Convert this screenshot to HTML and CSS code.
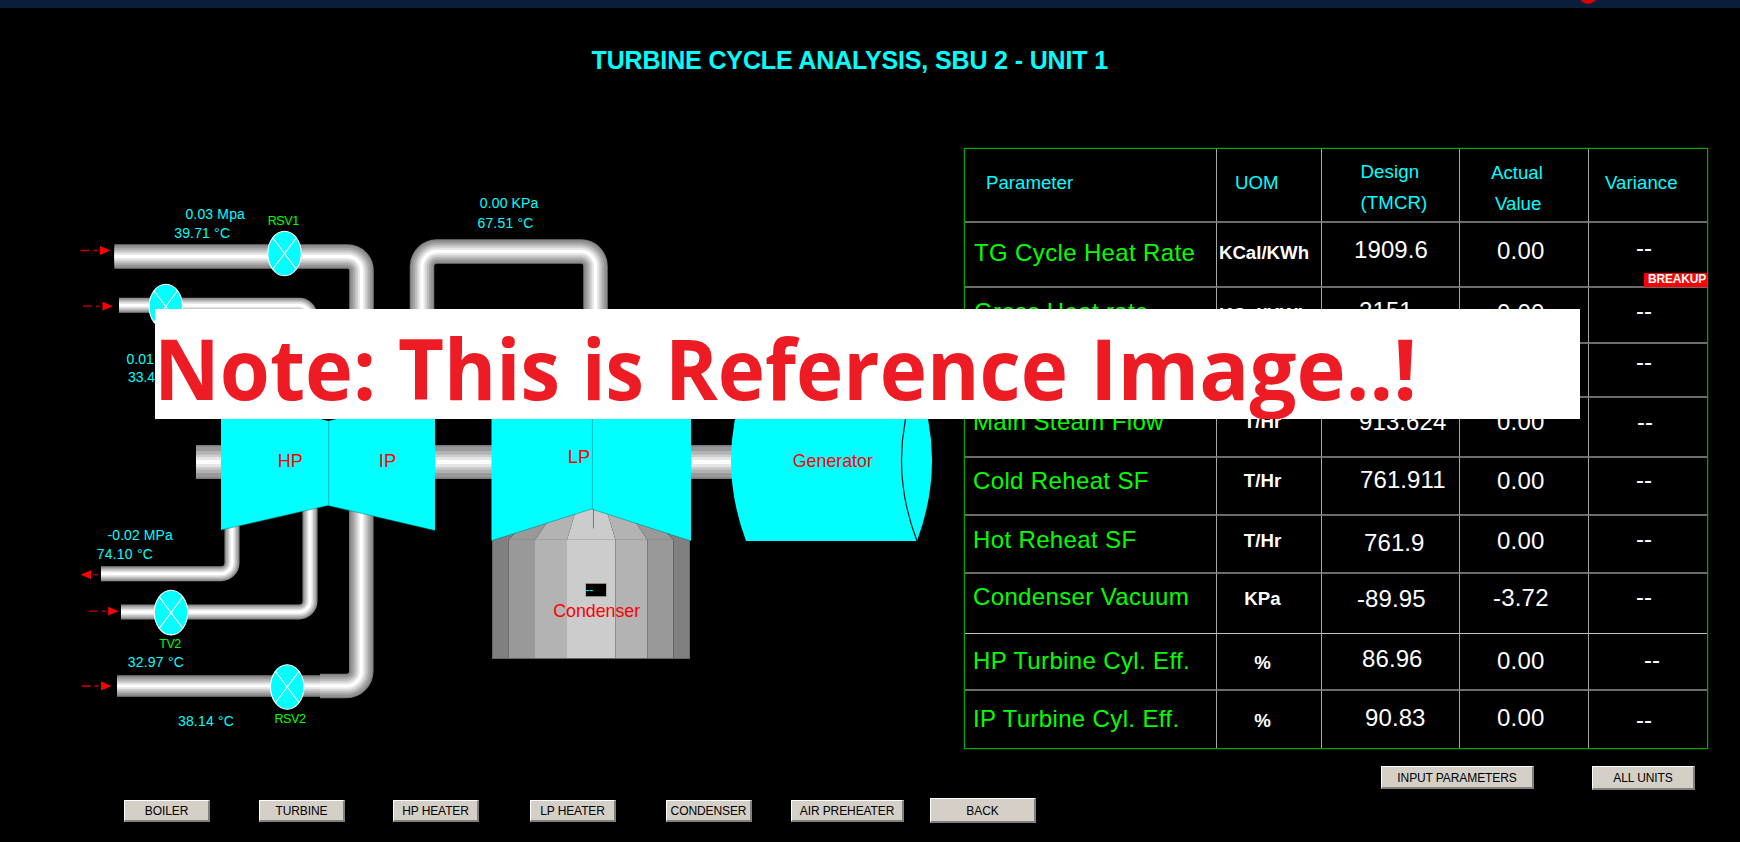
FILE: index.html
```html
<!DOCTYPE html>
<html lang="en">
<head>
<meta charset="utf-8">
<title>Turbine Cycle Analysis</title>
<link rel="stylesheet" href="styles.css">
</head>
<body>
<header class="topbar"><span class="alert-dot"></span></header>
<h1 class="title">TURBINE CYCLE ANALYSIS, SBU 2 - UNIT 1</h1>
<main class="content">
  <section class="left">
    <svg class="diagram" width="964" height="698" viewBox="0 100 964 698">
      <defs>
        <g id="wide">
          <path d="M114.5 256.5H347.5A14 14 0 0 1 361.5 270.5V330"/>
          <path d="M320 686H346.3A15 15 0 0 0 361.3 671V490"/>
          <path d="M422 330V266.6A15 15 0 0 1 437 251.6H581A14.5 14.5 0 0 1 595.5 266.1V330"/>
        </g>
        <path id="reheat" d="M117 686H321"/>
        <g id="thin">
          <path d="M119 305.3H299A11 11 0 0 1 310 316.3V330"/>
          <path d="M101 573.7H221A11 11 0 0 0 232 562.7V515"/>
          <path d="M121 612H299A11 11 0 0 0 310 601V490"/>
        </g>
        <path id="shaft" d="M196 462H740"/>
        <g id="valve">
          <ellipse rx="16.7" ry="22.3"/>
          <path d="M-12-16L12 16M12-16L-12 16"/>
        </g>
        <g id="arrow">
          <path class="dash" d="M0 0H9M13 0H17"/>
          <path class="head" d="M19.5-4.4L30 0L19.5 4.4Z"/>
        </g>
      </defs>

      <g class="pipes">
        <use href="#thin" class="t1"/><use href="#thin" class="t2"/><use href="#thin" class="t3"/><use href="#thin" class="t4"/><use href="#thin" class="t5"/>
        <use href="#reheat" class="r1p"/><use href="#reheat" class="r2p"/><use href="#reheat" class="r3p"/><use href="#reheat" class="r4p"/><use href="#reheat" class="r5p"/><use href="#reheat" class="r6p"/>
        <use href="#wide" class="w1"/><use href="#wide" class="w2"/><use href="#wide" class="w3"/><use href="#wide" class="w4"/><use href="#wide" class="w5"/><use href="#wide" class="w6"/><use href="#wide" class="w7"/>
        <use href="#shaft" class="s1"/><use href="#shaft" class="s2"/><use href="#shaft" class="s3"/><use href="#shaft" class="s4"/><use href="#shaft" class="s5"/><use href="#shaft" class="s6"/>
      </g>

      <g class="condenser">
        <path class="c1" d="M492 659V505H541L508.5 540V659Z"/>
        <path class="c2" d="M508.5 659V540L541 505H559L535 540V659Z"/>
        <path class="c3" d="M535 659V540L559 505H577.5L567 540V659Z"/>
        <path class="c4" d="M567 659V540L577.5 505H605L615.5 540V659Z"/>
        <path class="c3" d="M615.5 659V540L605 505H624L647.5 540V659Z"/>
        <path class="c2" d="M647.5 659V540L624 505H641L673.5 540V659Z"/>
        <path class="c1" d="M673.5 659V540L641 505H690V659Z"/>
        <path class="seam" d="M508 539.5H674"/>
        <path class="edge" d="M492.5 541V658.5H689.5V541"/>
      </g>
      <g class="machine">
        <path d="M221 394L328.5 421L435 394V530.5L328 505.5L221 530Z"/>
        <path d="M491.5 400H691V541L591.5 509L491.5 540.7Z"/>
        <path d="M746 380Q716 460 746 541H917Q947 460 917 380Z"/>
        <path class="crease" d="M221 530L328 505.5L435 530.5M328.7 421V505M491.5 540.7L591.5 509L691 541M592.4 410V509"/>
        <path class="crease-dark" d="M593.5 509V528.5"/>
        <path class="cap" d="M917 380Q886 460 917 541"/>
      </g>

      <g class="valves">
        <use href="#valve" x="284.5" y="253.5"/>
        <use href="#valve" x="165.8" y="306.5"/>
        <use href="#valve" x="171" y="612.6"/>
        <use href="#valve" x="287.2" y="687"/>
      </g>
      <g class="arrows">
        <use href="#arrow" x="80.5" y="250.5"/>
        <use href="#arrow" x="83" y="306.2"/>
        <use href="#arrow" x="88.7" y="611.2"/>
        <use href="#arrow" x="81.5" y="686"/>
        <path class="dash" d="M93 574.7H98"/>
        <path class="head" d="M91 570.3L80.5 574.7L91 579Z"/>
      </g>

      <rect class="box-edge" x="585.5" y="583" width="21" height="14"/>
      <rect class="box" x="586" y="584" width="20" height="12"/>
      <g class="reading">
        <text x="585.6" y="594" class="tiny">--</text>
        <text x="185.4" y="219" textLength="59.5">0.03 Mpa</text>
        <text x="174.2" y="238" textLength="55.8">39.71 °C</text>
        <text x="126.5" y="364">0.01</text>
        <text x="128" y="382" textLength="27">33.4</text>
        <text x="479.8" y="208" textLength="58.5">0.00 KPa</text>
        <text x="477.4" y="228" textLength="56">67.51 °C</text>
        <text x="107.5" y="540.3" textLength="65.3">-0.02 MPa</text>
        <text x="96.8" y="559" textLength="56">74.10 °C</text>
        <text x="127.8" y="667" textLength="56">32.97 °C</text>
        <text x="177.9" y="726" textLength="56">38.14 °C</text>
      </g>
      <g class="tag">
        <text x="267.7" y="225" textLength="31.5">RSV1</text>
        <text x="159.3" y="648" textLength="22">TV2</text>
        <text x="274.4" y="723" textLength="31.5">RSV2</text>
      </g>
      <g class="name">
        <text x="277.8" y="467" textLength="25" lengthAdjust="spacingAndGlyphs">HP</text>
        <text x="378.8" y="467" textLength="17.3" lengthAdjust="spacingAndGlyphs">IP</text>
        <text x="567.8" y="463" textLength="22.3" lengthAdjust="spacingAndGlyphs">LP</text>
        <text x="792.8" y="467" textLength="80" lengthAdjust="spacingAndGlyphs">Generator</text>
        <text x="553.3" y="617" textLength="86.8" lengthAdjust="spacingAndGlyphs">Condenser</text>
      </g>
    </svg>
    <nav class="nav">
      <button class="btn b1">BOILER</button>
      <button class="btn b2">TURBINE</button>
      <button class="btn b3">HP HEATER</button>
      <button class="btn b4">LP HEATER</button>
      <button class="btn b5">CONDENSER</button>
      <button class="btn b6">AIR PREHEATER</button>
      <button class="btn b7">BACK</button>
    </nav>
  </section>

  <section class="right">
    <div class="grid">
      <div class="row head"><div class="param">Parameter</div><div class="uom">UOM</div><div class="design">Design<br>(TMCR)</div><div class="actual">Actual<br><span class="indent">Value</span></div><div class="vary">Variance</div></div>
      <div class="row r1"><div class="param">TG Cycle Heat Rate</div><div class="uom">KCal/KWh</div><div class="design">1909.6</div><div class="actual">0.00</div><div class="vary">--<span class="breakup">BREAKUP</span></div></div>
      <div class="row r2"><div class="param">Gross Heat rate</div><div class="uom">KCal/KWh</div><div class="design">2151</div><div class="actual">0.00</div><div class="vary">--</div></div>
      <div class="row r3"><div class="param"></div><div class="uom"></div><div class="design"></div><div class="actual"></div><div class="vary">--</div></div>
      <div class="row r4"><div class="param">Main Steam Flow</div><div class="uom">T/Hr</div><div class="design">913.624</div><div class="actual">0.00</div><div class="vary">--</div></div>
      <div class="row r5"><div class="param">Cold Reheat SF</div><div class="uom">T/Hr</div><div class="design">761.911</div><div class="actual">0.00</div><div class="vary">--</div></div>
      <div class="row r6"><div class="param">Hot Reheat SF</div><div class="uom">T/Hr</div><div class="design">761.9</div><div class="actual">0.00</div><div class="vary">--</div></div>
      <div class="row r7"><div class="param">Condenser Vacuum</div><div class="uom">KPa</div><div class="design">-89.95</div><div class="actual">-3.72</div><div class="vary">--</div></div>
      <div class="row r8"><div class="param">HP Turbine Cyl. Eff.</div><div class="uom">%</div><div class="design">86.96</div><div class="actual">0.00</div><div class="vary">--</div></div>
      <div class="row r9"><div class="param">IP Turbine Cyl. Eff.</div><div class="uom">%</div><div class="design">90.83</div><div class="actual">0.00</div><div class="vary">--</div></div>
    </div>
    <div class="actions">
      <button class="btn wide-btn">INPUT PARAMETERS</button>
      <button class="btn units-btn">ALL UNITS</button>
    </div>
  </section>
</main>

<svg class="banner" width="1425" height="110" viewBox="155 309 1425 110">
  <text x="154" y="400" textLength="222" lengthAdjust="spacingAndGlyphs">Note:</text>
  <text x="398" y="400" textLength="162" lengthAdjust="spacingAndGlyphs">This</text>
  <text x="582" y="400" textLength="62" lengthAdjust="spacingAndGlyphs">is</text>
  <text x="665" y="400" textLength="403" lengthAdjust="spacingAndGlyphs">Reference</text>
  <text x="1090" y="400" textLength="327" lengthAdjust="spacingAndGlyphs">Image..!</text>
</svg>
</body>
</html>
```
FILE: styles.css
```css
* { box-sizing: border-box; }
body {
  margin: 0;
  width: 1740px;
  height: 842px;
  overflow: hidden;
  position: relative;
  background: #000;
  font-family: "Liberation Sans", Arial, sans-serif;
}
.topbar { height: 8px; background: #0a1e3c; overflow: hidden; position: relative; }
.alert-dot {
  position: absolute; left: 1579px; top: -14px;
  width: 18px; height: 18px; border-radius: 50%; background: #d80000;
}
.title {
  margin: 0; height: 92px; padding: 38px 0 0 591.5px;
  font-size: 25px; line-height: 28px; font-weight: bold; color: #0ff;
  white-space: nowrap; letter-spacing: -0.14px;
}
.content { display: flex; align-items: flex-start; }
.left { width: 964px; flex: none; }
.diagram { display: block; }

/* pipes: concentric strokes, dark edge to white core */
.pipes { fill: none; }
.t1 { stroke: #8a8a8a; stroke-width: 15; }
.t2 { stroke: #a8a8a8; stroke-width: 12; }
.t3 { stroke: #c6c6c6; stroke-width: 9; }
.t4 { stroke: #e2e2e2; stroke-width: 6; }
.t5 { stroke: #fff; stroke-width: 3; }
.r1p { stroke: #848484; stroke-width: 21.5; }
.r2p { stroke: #9c9c9c; stroke-width: 17.5; }
.r3p { stroke: #b5b5b5; stroke-width: 13.5; }
.r4p { stroke: #cecece; stroke-width: 9.5; }
.r5p { stroke: #e6e6e6; stroke-width: 6; }
.r6p { stroke: #fff; stroke-width: 2.5; }
.w1 { stroke: #7c7c7c; stroke-width: 24.5; }
.w2 { stroke: #939393; stroke-width: 22; }
.w3 { stroke: #a8a8a8; stroke-width: 17.5; }
.w4 { stroke: #bebebe; stroke-width: 13.5; }
.w5 { stroke: #d4d4d4; stroke-width: 10; }
.w6 { stroke: #eaeaea; stroke-width: 6.5; }
.w7 { stroke: #fff; stroke-width: 3; }
.s1 { stroke: #7d7d7d; stroke-width: 34; }
.s2 { stroke: #999; stroke-width: 31; }
.s3 { stroke: #b3b3b3; stroke-width: 22; }
.s4 { stroke: #ccc; stroke-width: 15; }
.s5 { stroke: #e6e6e6; stroke-width: 10; }
.s6 { stroke: #fff; stroke-width: 4; }

.c1 { fill: #808080; }
.c2 { fill: #999; }
.c3 { fill: #b3b3b3; }
.c4 { fill: #ccc; }
.seam { stroke: #777; stroke-opacity: .3; }
.edge { fill: none; stroke: #666; }
.machine { fill: #0ff; }
.crease { fill: none; stroke: #066; stroke-opacity: .45; }
.crease-dark { fill: none; stroke: #777; }
.cap { fill: none; stroke: #001c1c; stroke-width: 1.2; }
.valves { fill: #0ff; stroke: #fff; stroke-width: 1.1; }
.dash { stroke: #d00000; stroke-width: 1.3; fill: none; }
.head { fill: #f00; }
.box-edge { fill: #8c8c8c; }
.box { fill: #000; }
.reading { fill: #0ff; font-size: 14px; }
.tiny { font-size: 12px; }
.tag { fill: #0f0; font-size: 12.5px; }
.name { fill: #f00; font-size: 18.5px; }

.nav { display: flex; align-items: flex-start; padding-left: 124px; width: 1060px; }
.btn {
  margin: 2px 0 0; padding: 1px 0 0; height: 22px; flex: none;
  font: 12px/18px "Liberation Sans", Arial, sans-serif; letter-spacing: -.1px; color: #000;
  white-space: nowrap; background: #d4d0c8; border-radius: 0;
  border-style: solid; border-color: #fff #808080 #808080 #fff; border-width: 1px 2px 2px 1px;
}
.b1 { width: 86px; }
.b2 { width: 86px; margin-left: 49px; }
.b3 { width: 86px; margin-left: 48px; }
.b4 { width: 86px; margin-left: 51px; }
.b5 { width: 86px; margin-left: 50px; }
.b6 { width: 113px; margin-left: 39px; padding: 0; }
.b7 { width: 106px; height: 25px; margin: 0 0 0 26px; }

.right { flex: none; width: 776px; padding-top: 48px; }
.grid {
  width: 744px; border: 1px solid #00a800;
  box-shadow: 0 0 0 .5px #004800; color: #fff;
}
.row { display: grid; grid-template-columns: 252px 105px 138px 129px 118px; }
.row > div {
  border-right: 1px solid #a6a6a6; border-bottom: 2px solid #6c6c6c;
  font-size: 24px; line-height: 28px; white-space: nowrap;
}
.row > .vary { border-right: 0; position: relative; }
.row > .param { color: #0f0; padding-left: 8px; letter-spacing: .36px; }
.row > .uom { font-size: 18.67px; font-weight: bold; text-align: center; padding-right: 13px; }
.row > .design { letter-spacing: .1px; }
.row > .actual { padding-left: 37px; letter-spacing: .2px; }
.row > .vary { padding-left: 47px; }

.head > div { height: 74px; }
.row.head > div { color: #0ff; font-size: 18.67px; font-weight: normal; text-align: left; letter-spacing: 0; }
.row.head > .param { padding: 20px 0 0 21px; }
.row.head > .uom { padding: 20px 0 0 18px; }
.row.head > .design { padding: 7px 0 0 38.5px; line-height: 31px; letter-spacing: .1px; }
.row.head > .actual { padding: 8px 0 0 31px; line-height: 31px; }
.row.head > .vary { padding: 20px 0 0 16px; letter-spacing: .05px; }
.indent { padding-left: 4px; }

.r1 > div { height: 65px; }
.r1 > .param { padding: 16px 0 0 9px; }
.r1 > .uom { padding-top: 16px; padding-right: 10px; }
.r1 > .design { padding: 13px 0 0 32px; }
.r1 > .actual { padding-top: 14px; }
.r1 > .vary { padding-top: 11px; }
.breakup {
  position: absolute; right: 0; bottom: -1px; width: 63px; height: 14px; padding-left: 4px;
  background: #f00; color: #fff; font-size: 12px; line-height: 12px; font-weight: bold; letter-spacing: -.2px;
}
.r2 > div { height: 56px; }
.r2 > .param { padding: 10px 0 0 9px; }
.r2 > .uom { padding-top: 13px; padding-right: 10px; }
.r2 > .design { padding: 9px 0 0 37px; }
.r2 > .actual { padding-top: 11px; }
.r2 > .vary { padding-top: 9px; }
.r3 > div { height: 54px; }
.r3 > .vary { padding-top: 4px; }
.r4 > div { height: 60px; }
.r4 > .param, .r4 > .uom { padding-top: 10px; }
.r4 > .design { padding: 10px 0 0 37px; }
.r4 > .actual { padding-top: 10px; }
.r4 > .vary { padding: 10px 0 0 48px; }
.r5 > div { height: 58px; }
.r5 > .param { padding-top: 9px; }
.r5 > .uom, .r5 > .actual { padding-top: 9px; }
.r5 > .design { padding: 8px 0 0 38px; }
.r5 > .vary { padding-top: 8px; }
.r6 > div { height: 58px; }
.r6 > .param { padding-top: 10px; }
.r6 > .uom, .r6 > .actual { padding-top: 11px; }
.r6 > .design { padding: 13px 0 0 42px; }
.r6 > .vary { padding-top: 9px; }
.r7 > div { height: 60px; }
.r7 > .param, .r7 > .vary { padding-top: 9px; }
.r7 > .uom { padding-top: 11px; }
.r7 > .design { padding: 11px 0 0 35px; }
.r7 > .actual { padding: 10px 0 0 33px; }
.row.r7 > div { border-bottom: 1px solid #c0c0c0; }
.r8 > div { height: 57px; }
.r8 > .param { padding-top: 13px; }
.r8 > .uom { padding-top: 15px; }
.r8 > .design { padding: 11px 0 0 40px; }
.r8 > .actual { padding-top: 13px; }
.r8 > .vary { padding: 12px 0 0 55px; }
.r9 > div { height: 57px; }
.r9 > .param { padding-top: 14px; }
.r9 > .vary { padding-top: 15px; }
.r9 > .uom { padding-top: 16px; }
.r9 > .design { padding: 13px 0 0 43px; }
.r9 > .actual { padding-top: 13px; }
.row.r9 > div { border-bottom: 0; }

.actions { display: flex; padding: 15px 0 0 417px; }
.wide-btn { width: 153px; height: 23px; }
.units-btn { width: 103px; height: 24px; margin-left: 58px; }

.banner { position: absolute; left: 155px; top: 309px; background: #fff; }
.banner text { font: bold 84px "Open Sans", sans-serif; fill: #ed1c24; }
```
